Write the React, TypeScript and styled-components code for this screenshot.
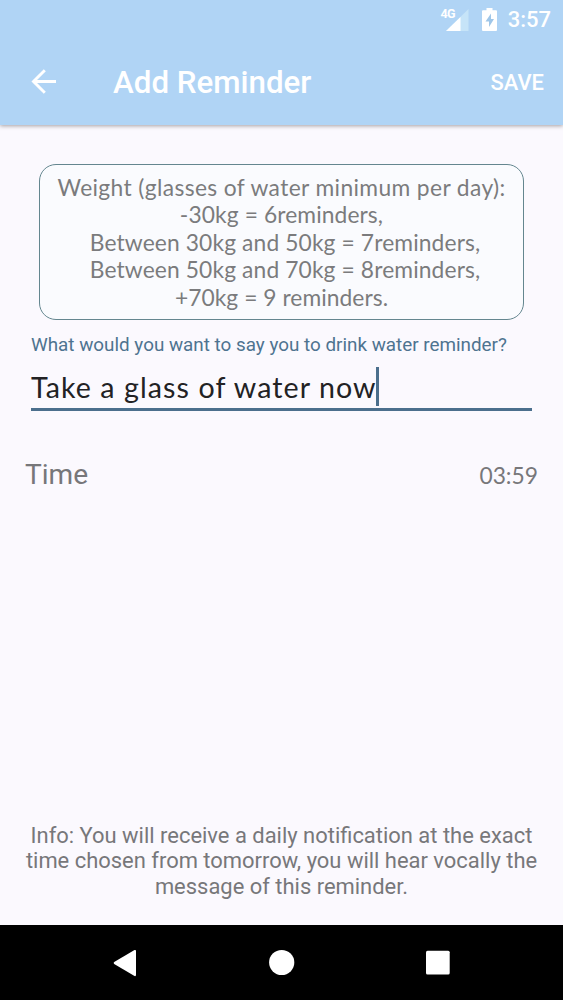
import React from "react";
import styled, { createGlobalStyle } from "styled-components";

const GlobalStyle = createGlobalStyle`
  * { box-sizing: border-box; }
  body { margin: 0; background: #fbf9fe; font-family: Roboto, sans-serif; }
`;

const Screen = styled.div`
  width: 563px;
  height: 1000px;
  display: flex;
  flex-direction: column;
  overflow: hidden;
  background: #fbf9fe;
`;

const Header = styled.header`
  height: 125px;
  flex: none;
  background: #b0d4f5;
  color: #fff;
  box-shadow: 0 1px 4px rgba(60, 50, 50, 0.45);
`;

const StatusBar = styled.div`
  height: 38px;
  display: flex;
  align-items: center;
  justify-content: flex-end;
  padding-right: 12px;
`;

const Network = styled.span`
  align-self: flex-start;
  margin: 8px -9px 0 0;
  font-family: "Liberation Sans Narrow", Roboto, sans-serif;
  font-size: 12.5px;
  line-height: 12px;
  font-weight: 700;
  letter-spacing: -0.8px;
`;

const SignalIcon = styled.svg`
  flex: none;
  margin: 1px 13px 0 0;
`;

const BatteryIcon = styled.svg`
  flex: none;
  margin-right: 11px;
`;

const Clock = styled.span`
  font-size: 22px;
  line-height: 26px;
  font-weight: 500;
  padding-top: 2px;
`;

const Toolbar = styled.div`
  height: 87px;
  display: flex;
  align-items: center;
  padding: 2px 19px 0 31px;
`;

const BackButton = styled.button`
  display: flex;
  width: 82px;
  padding: 0 0 2px;
  border: 0;
  background: none;
  color: inherit;
`;

const Title = styled.h1`
  flex: 1;
  margin: 0;
  font-size: 31.3px;
  line-height: 38px;
  font-weight: 500;
`;

const SaveButton = styled.button`
  padding: 0;
  border: 0;
  background: none;
  color: inherit;
  font: 500 21.9px/26px Roboto, sans-serif;
`;

const Content = styled.main`
  flex: 1;
  display: flex;
  flex-direction: column;
  padding: 39px 25px 25px;
`;

const WeightCard = styled.section`
  height: 156px;
  margin: 0 14px;
  padding: 9px 0;
  border: 1px solid #64868f;
  border-radius: 17px;
  background: #fafbfe;
  color: #7b7b7d;
  text-align: center;
`;

const WeightLine = styled.div<{ $spacing: number; $indent: number }>`
  padding-left: ${(p) => p.$indent}px;
  font-family: Lato, sans-serif;
  font-size: 22.8px;
  line-height: 27.4px;
  letter-spacing: ${(p) => p.$spacing}px;
  white-space: nowrap;
`;

const Field = styled.label`
  display: block;
  margin: 13px 6px 0;
`;

const FieldLabel = styled.span`
  display: block;
  font-size: 18.85px;
  line-height: 24px;
  color: #4e7390;
  white-space: nowrap;
`;

const FieldValue = styled.div`
  display: flex;
  align-items: center;
  height: 54px;
  padding-top: 8px;
  border-bottom: 3px solid #4b6f8d;
  color: #222224;
  font-family: Lato, sans-serif;
  font-size: 28.6px;
  letter-spacing: 1.08px;
  white-space: nowrap;
`;

const Caret = styled.span`
  width: 3px;
  height: 39px;
  margin-left: -1px;
  background: #4b6f8d;
`;

const TimeRow = styled.div`
  display: flex;
  align-items: center;
  justify-content: space-between;
  margin-top: 44px;
  height: 38px;
  color: #77777a;
`;

const TimeLabel = styled.span`
  font-size: 28.1px;
`;

const TimeValue = styled.span`
  font-family: Lato, sans-serif;
  font-size: 22.8px;
  padding-top: 1px;
`;

const Info = styled.p`
  margin: auto -6px 0;
  color: #77777a;
  font-size: 21.95px;
  line-height: 25.8px;
  text-align: center;
`;

const NavBar = styled.nav`
  height: 75px;
  flex: none;
  display: flex;
  align-items: center;
  justify-content: center;
  gap: 128px;
  background: #000;
`;

const weights = [
  { text: "Weight (glasses of water minimum per day):", spacing: 0.37, indent: 0 },
  { text: "-30kg = 6reminders,", spacing: 0.1, indent: 0 },
  { text: "Between 30kg and 50kg = 7reminders,", spacing: 0.12, indent: 7 },
  { text: "Between 50kg and 70kg = 8reminders,", spacing: 0.12, indent: 7 },
  { text: "+70kg = 9 reminders.", spacing: 0.05, indent: 0 },
];

export default function App() {
  return (
    <Screen>
      <GlobalStyle />
      <Header>
        <StatusBar>
          <Network>4G</Network>
          <SignalIcon width="23" height="22" viewBox="0 0 23 22">
            <path d="M22.5 0V22H0Z" fill="#c6e4f8" />
            <path d="M14.5 8V22H0Z" fill="#fff" />
          </SignalIcon>
          <BatteryIcon width="15" height="23" viewBox="0 0 15 23">
            <path d="M4.5 0h6v2.3H14Q15 2.3 15 3.3V22q0 1-1 1H1q-1 0-1-1V3.3Q0 2.3 1 2.3h3.5Z" fill="#fff" />
            <path d="M9 5.5 3.5 13.5H7V19l5-8H9Z" fill="#9fc6e8" />
          </BatteryIcon>
          <Clock>3:57</Clock>
        </StatusBar>
        <Toolbar>
          <BackButton aria-label="Back">
            <svg width="25" height="25" viewBox="0 0 25 25" fill="none" stroke="#fff" strokeWidth="2.9">
              <path d="M25 12.5H3M13.8 1.2 2.5 12.5l11.3 11.3" />
            </svg>
          </BackButton>
          <Title>Add Reminder</Title>
          <SaveButton>SAVE</SaveButton>
        </Toolbar>
      </Header>
      <Content>
        <WeightCard>
          {weights.map((w) => (
            <WeightLine key={w.text} $spacing={w.spacing} $indent={w.indent}>
              {w.text}
            </WeightLine>
          ))}
        </WeightCard>
        <Field>
          <FieldLabel>What would you want to say you to drink water reminder?</FieldLabel>
          <FieldValue>
            <span>Take a glass of water now</span>
            <Caret />
          </FieldValue>
        </Field>
        <TimeRow>
          <TimeLabel>Time</TimeLabel>
          <TimeValue>03:59</TimeValue>
        </TimeRow>
        <Info>
          Info: You will receive a daily notification at the exact
          <br />
          time chosen from tomorrow, you will hear vocally the
          <br />
          message of this reminder.
        </Info>
      </Content>
      <NavBar>
        <svg width="28" height="28" viewBox="0 0 28 28" fill="#fff">
          <path d="M22.5 1 2.2 13Q1 14 2.2 15L22.5 27Q24 27.5 24 26V2Q24 .5 22.5 1Z" />
        </svg>
        <svg width="28" height="28" viewBox="0 0 28 28" fill="#fff">
          <circle cx="13.7" cy="13.5" r="12.6" />
        </svg>
        <svg width="28" height="28" viewBox="0 0 28 28" fill="#fff">
          <rect x="2" y="1.7" width="23.7" height="23.7" rx="1.5" />
        </svg>
      </NavBar>
    </Screen>
  );
}
